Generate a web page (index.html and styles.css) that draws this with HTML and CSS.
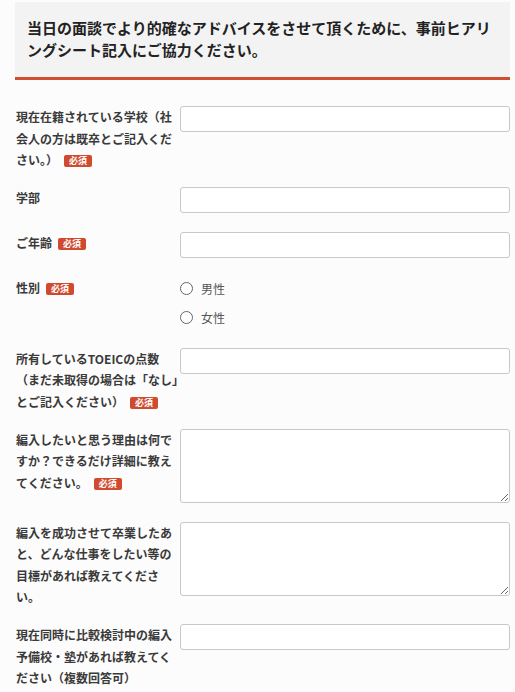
FILE: index.html
```html
<!DOCTYPE html>
<html lang="ja">
<head>
<meta charset="utf-8">
<title>ヒアリングシート</title>
<link rel="stylesheet" href="styles.css">
</head>
<body>
<div class="page">
  <div class="intro">当日の面談でより的確なアドバイスをさせて頂くために、事前ヒアリングシート記入にご協力ください。</div>
  <form class="form">
    <div class="row">
      <label class="label">現在在籍されている学校（社会人の方は既卒とご記入ください。）<span class="req">必須</span></label>
      <div class="field"><input class="input" type="text"></div>
    </div>
    <div class="row">
      <label class="label">学部</label>
      <div class="field"><input class="input" type="text"></div>
    </div>
    <div class="row">
      <label class="label">ご年齢<span class="req">必須</span></label>
      <div class="field"><input class="input" type="text"></div>
    </div>
    <div class="row">
      <div class="label">性別<span class="req">必須</span></div>
      <div class="field radios">
        <label class="radio"><input type="radio" name="sex"><span>男性</span></label>
        <label class="radio"><input type="radio" name="sex"><span>女性</span></label>
      </div>
    </div>
    <div class="row">
      <label class="label">所有しているTOEICの点数（まだ未取得の場合は「なし」とご記入ください）<span class="req">必須</span></label>
      <div class="field"><input class="input" type="text"></div>
    </div>
    <div class="row">
      <label class="label">編入したいと思う理由は何ですか？できるだけ詳細に教えてください。<span class="req">必須</span></label>
      <div class="field"><textarea class="textarea"></textarea></div>
    </div>
    <div class="row">
      <label class="label">編入を成功させて卒業したあと、どんな仕事をしたい等の目標があれば教えてください。</label>
      <div class="field"><textarea class="textarea"></textarea></div>
    </div>
    <div class="row">
      <label class="label">現在同時に比較検討中の編入予備校・塾があれば教えてください（複数回答可）</label>
      <div class="field"><input class="input" type="text"></div>
    </div>
  </form>
</div>
</body>
</html>
```

FILE: styles.css
```css
html, body {
  margin: 0;
  padding: 0;
  background: #fcfcfc;
}

body {
  font-family: "Noto Sans CJK JP", "Noto Sans", sans-serif;
  color: #333;
}

.page {
  padding: 2px 5px 0 15px;
}

.intro {
  background: #f3f3f3;
  border-bottom: 3px solid #cf4d31;
  padding: 15px 12px 16px;
  font-size: 15px;
  line-height: 22px;
  font-weight: bold;
  color: #222;
}

.form {
  padding: 26px 0 0 1px;
}

.row {
  display: grid;
  grid-template-columns: 164px 1fr;
  margin-bottom: 16px;
}

.label {
  font-size: 12px;
  line-height: 21.6px;
  font-weight: bold;
  color: #3a3a3a;
}

.req {
  display: inline-block;
  margin-left: 6px;
  padding: 0 5px;
  background: #cf4a2e;
  color: #fff;
  font-size: 9px;
  line-height: 12px;
  font-weight: bold;
  border-radius: 2px;
  vertical-align: 1px;
}

.field {
  padding-bottom: 3px;
  display: flex;
  flex-direction: column;
}

.input,
.textarea {
  box-sizing: border-box;
  width: 100%;
  margin: 0;
  border: 1px solid #c8c8c8;
  border-radius: 3px;
  background: #fff;
  font: inherit;
}

.input {
  height: 26px;
}

.textarea {
  height: 74px;
  display: block;
}

.radios {
  gap: 6px;
}

.radio {
  display: flex;
  align-items: center;
  height: 23px;
  font-size: 12px;
  color: #555;
}

.radio input {
  appearance: none;
  -webkit-appearance: none;
  box-sizing: border-box;
  width: 13px;
  height: 13px;
  margin: 0 8px 0 0;
  border: 1px solid #666;
  border-radius: 50%;
  background: #fff;
}
```
